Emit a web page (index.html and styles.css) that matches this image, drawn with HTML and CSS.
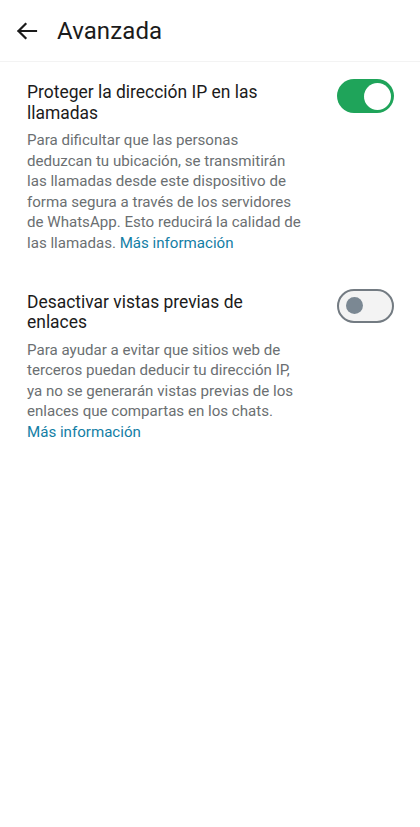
FILE: index.html
```html
<!DOCTYPE html>
<html lang="es">
<head>
<meta charset="utf-8">
<title>Avanzada</title>
<link rel="stylesheet" href="styles.css">
</head>
<body>
<header class="topbar">
  <svg class="back" width="24" height="24" viewBox="0 0 24 24" aria-hidden="true">
    <path d="M21 12H3.5M10.5 5L3.5 12L10.5 19" fill="none" stroke="#1b1b1b" stroke-width="2.2" stroke-linecap="square" stroke-linejoin="miter"/>
  </svg>
  <h1 class="title">Avanzada</h1>
</header>
<main class="list">
  <section class="item">
    <div class="text">
      <h2 class="item-title">Proteger la dirección IP en las llamadas</h2>
      <p class="desc">Para dificultar que las personas deduzcan tu ubicación, se transmitirán las llamadas desde este dispositivo de forma segura a través de los servidores de WhatsApp. Esto reducirá la calidad de las llamadas. <a class="link" href="#">Más información</a></p>
    </div>
    <div class="switch on"><span class="thumb"></span></div>
  </section>
  <section class="item">
    <div class="text">
      <h2 class="item-title">Desactivar vistas previas de enlaces</h2>
      <p class="desc">Para ayudar a evitar que sitios web de terceros puedan deducir tu dirección IP, ya no se generarán vistas previas de los enlaces que compartas en los chats. <a class="link" href="#">Más información</a></p>
    </div>
    <div class="switch off"><span class="thumb"></span></div>
  </section>
</main>
</body>
</html>
```
FILE: styles.css
```css
html, body {
  margin: 0;
  padding: 0;
  background: #ffffff;
}
body {
  font-family: Roboto, "Noto Sans", "Liberation Sans", sans-serif;
  color: #111b21;
}
.topbar {
  height: 61px;
  display: flex;
  align-items: center;
  padding-left: 15px;
  border-bottom: 1px solid #f3f3f3;
  box-sizing: content-box;
}
.back {
  display: block;
  margin-top: 1px;
}
.title {
  margin: 0 0 0 18px;
  font-size: 24px;
  font-weight: 400;
  color: #1b1b1b;
  letter-spacing: 0.1px;
}
.list {
  padding: 20px 26px 0 27px;
  display: flex;
  flex-direction: column;
  gap: 38px;
}
.item {
  display: flex;
  align-items: flex-start;
  justify-content: space-between;
}
.text {
  width: 274px;
}
.item-title {
  margin: 0;
  font-size: 17.45px;
  font-weight: 400;
  line-height: 20.5px;
  color: #1b1b1b;
}
.desc {
  margin: 7px 0 0 0;
  font-size: 15.1px;
  line-height: 20.6px;
  color: #6b6f72;
}
.link {
  color: #137ea5;
  text-decoration: none;
}
.switch {
  position: relative;
  width: 57px;
  height: 34px;
  border-radius: 17px;
  box-sizing: border-box;
  margin-top: -3px;
  flex: none;
}
.switch.on {
  background: #1fa45a;
}
.switch.off {
  background: #f3f3f3;
  border: 2.5px solid #737b82;
}
.thumb {
  position: absolute;
  border-radius: 50%;
}
.switch.on .thumb {
  width: 27px;
  height: 27px;
  right: 3.5px;
  top: 3.5px;
  background: #ffffff;
}
.switch.off .thumb {
  width: 17px;
  height: 17px;
  left: 6.5px;
  top: 6px;
  background: #7b8893;
}
```
